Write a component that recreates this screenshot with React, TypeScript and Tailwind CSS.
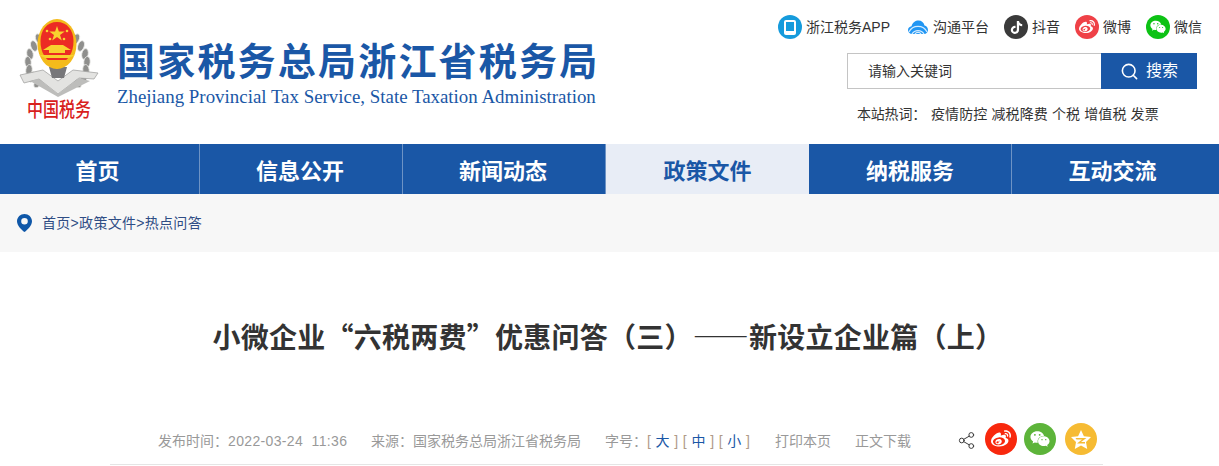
import React from "react";
import { FaWeibo, FaWeixin, FaTiktok } from "react-icons/fa";
import { Search, Share2 } from "lucide-react";

const sans = "font-['Liberation_Sans','Noto_Sans_CJK_SC',sans-serif]";
const cjk = "font-['Noto_Sans_CJK_SC',sans-serif]";

const leaves = [
  [20, 20, -25], [15, 27, -20], [11, 35, -12], [9, 43, -5], [10, 51, 8], [13, 58, 22], [19, 64, 38],
];

function Emblem() {
  return (
    <svg width="80" height="78" viewBox="0 0 80 78" className="block">
      {leaves.map(([x, y, r], i) => (
        <g key={i}>
          <ellipse cx={x} cy={y} rx="3.200" ry="5.500" transform={`rotate(${r} ${x} ${y})`} fill="#8f8f8d" stroke="#ecece9" strokeWidth="0.800" />
          <ellipse cx={77 - x} cy={y} rx="3.200" ry="5.500" transform={`rotate(${-r} ${77 - x} ${y})`} fill="#8f8f8d" stroke="#ecece9" strokeWidth="0.800" />
        </g>
      ))}
      <path d="M1 56 L24 51 L39 62 L54 51 L79 54 L75 60 L60 59 L39 75 L20 60 L5 64 Z" fill="#e3e3e1" stroke="#a5a5a3" strokeWidth="0.800" />
      <path d="M11 62 L20 60 L39 75 L60 59 L71 62 L39 78 Z" fill="#bdbdbb" />
      <path d="M30 48 h18 l-3 11 h-12 Z" fill="#77777a" />
      <ellipse cx="38" cy="25" rx="19.500" ry="25" fill="#f4bb1c" />
      <path d="M38 3 C48 3 54.500 11 54.500 22 C54.500 33 50 42 38 47 C26 42 21.500 33 21.500 22 C21.500 11 28 3 38 3 Z" fill="#ec2b24" />
      <path d="M38 7 l1.900 5.500 h5.800 l-4.700 3.400 1.800 5.600 -4.800-3.400 -4.800 3.400 1.800-5.600 -4.700-3.400 h5.800 Z" fill="#f8d22f" />
      <circle cx="28" cy="12" r="1.300" fill="#f8d22f" />
      <circle cx="48" cy="12" r="1.300" fill="#f8d22f" />
      <circle cx="31" cy="20" r="1.300" fill="#f8d22f" />
      <circle cx="45" cy="20" r="1.300" fill="#f8d22f" />
      <path d="M24 31 L32 26 H44 L52 31 H46 V34 H30 V31 Z" fill="#f8d22f" />
      <path d="M20 36 H56 L50 39 H26 Z" fill="#f8d22f" />
      <path d="M26 41 H50 L44 46 L38 50 L32 46 Z" fill="#f4bb1c" />
    </svg>
  );
}

function Cloud() {
  return (
    <svg width="20" height="16" viewBox="0 0 20 16">
      <path d="M4.500 15 C1.500 15 0 13 0 11 C0 9 1.500 7.500 3.500 7.300 C4.500 3.500 7.500 1.500 10.500 1.500 C13.500 1.500 16 3.500 16.500 6.500 C18.500 7 20 8.800 20 11 C20 13 18.500 15 16 15 Z" fill="#2196f3" />
      <path d="M4 15 A7 7 0 0 1 16 15 M7 15 A3.500 3.500 0 0 1 13 15 M1 13 A10 10 0 0 1 19 13" fill="none" stroke="#d5ecff" strokeWidth="1.200" />
    </svg>
  );
}

function Circle({ className, children }: { className: string; children: React.ReactNode }) {
  return <span className={`flex items-center justify-center rounded-full ${className}`}>{children}</span>;
}

function TopLink({ icon, label, className }: { icon: React.ReactNode; label: string; className?: string }) {
  return (
    <span className={`flex items-center gap-[4px] text-[14px] leading-[24px] text-[#333] ${className ?? ""}`}>
      {icon}
      {label}
    </span>
  );
}

const navItems = ["信息公开", "新闻动态", "政策文件", "纳税服务", "互动交流"];

export default function App() {
  return (
    <div className={`w-[1219px] h-[466px] overflow-hidden bg-white ${sans}`}>
      <header className="h-[144px] flex justify-between">
        <div className="flex pl-[19px] pt-[19px]">
          <div className="w-[80px] flex flex-col items-center">
            <Emblem />
            <span className={`text-[#d8201c] text-[16px] leading-[20px] font-medium mt-[1px] scale-y-125 ${cjk}`}>中国税务</span>
          </div>
          <div className="ml-[18px] pt-[17px]">
            <div className={`text-[#1a57a6] text-[38px] leading-[46px] font-bold tracking-[2.2px] whitespace-nowrap ${cjk}`}>国家税务总局浙江省税务局</div>
            <div className="text-[#1a57a6] text-[18.900px] leading-[24px] mt-[3px] font-['Liberation_Serif',serif] whitespace-nowrap">Zhejiang Provincial Tax Service, State Taxation Administration</div>
          </div>
        </div>
        <div className="w-[441px] pt-[14px] flex flex-col">
          <div className="flex items-center h-[26px]">
            <TopLink
              label="浙江税务APP"
              icon={
                <Circle className="w-[24px] h-[24px] bg-[#169bdc]">
                  <span className="w-[12px] h-[15px] rounded-[2px] bg-white flex items-center justify-center"><span className="w-[8px] h-[9px] bg-[#169bdc] -mt-[2px]" /></span>
                </Circle>
              }
            />
            <TopLink className="ml-[18px] gap-[5px]" label="沟通平台" icon={<Cloud />} />
            <TopLink
              className="ml-[15px]"
              label="抖音"
              icon={<Circle className="w-[24px] h-[24px] bg-[#3a3a3a] text-white"><FaTiktok size={13} /></Circle>}
            />
            <TopLink
              className="ml-[15px]"
              label="微博"
              icon={<Circle className="w-[24px] h-[24px] bg-[#ef4147] text-white"><FaWeibo size={16} /></Circle>}
            />
            <TopLink
              className="ml-[15px]"
              label="微信"
              icon={<Circle className="w-[24px] h-[24px] bg-[#0dc215] text-white"><FaWeixin size={16} /></Circle>}
            />
          </div>
          <div className="mt-[13px] ml-[69px] w-[350px] h-[36px] flex">
            <div className="w-[254px] h-[36px] border border-[#c4c4c4] border-r-0 pl-[20px] text-[14px] leading-[34px] text-[#333]">请输入关键词</div>
            <div className="w-[96px] h-[36px] bg-[#1a57a6] text-white text-[16px] flex items-center justify-center gap-[7px]">
              <Search size={19} strokeWidth={2} />
              搜索
            </div>
          </div>
          <div className="mt-[15px] ml-[79px] text-[14px] leading-[20px] text-[#333] whitespace-nowrap tracking-[-0.2px]">
            本站热词：<span className="ml-[5px] tracking-[0.12px]">疫情防控 减税降费 个税 增值税 发票</span>
          </div>
        </div>
      </header>

      <nav className={`h-[50px] bg-[#1a57a6] flex ${cjk}`}>
        <div className="w-[200px] flex items-center justify-center border-r border-[#6d93c5] text-white text-[22px] font-bold pr-[4px]">首页</div>
        {navItems.map((t, i) => (
          <div
            key={t}
            className={`w-[203px] flex items-center justify-center text-[22px] font-bold ${t === "政策文件" ? "bg-[#e8edf6] text-[#1a57a6]" : "text-white"} ${i === 0 || i === 1 || i === 3 ? "border-r border-[#6d93c5]" : ""} ${i === 0 || i === 1 || i === 4 ? "pr-[2px]" : ""}`}
          >
            {t}
          </div>
        ))}
      </nav>

      <div className="h-[58px] bg-[#f7f7f7] flex items-center pl-[17px]">
        <svg width="15" height="18" viewBox="0 0 15 18">
          <path fillRule="evenodd" d="M7.500 0 C3.400 0 0 3.200 0 7.200 C0 11.500 4.500 15.800 7.500 18 C10.500 15.800 15 11.500 15 7.200 C15 3.200 11.600 0 7.500 0 Z M7.500 4 A3.300 3.300 0 1 1 7.500 10.600 A3.300 3.300 0 0 1 7.500 4 Z" fill="#0f57a8" />
        </svg>
        <span className="ml-[10px] text-[14px] tracking-[0.3px] text-[#2f4d85]">首页&gt;政策文件&gt;热点问答</span>
      </div>

      <h1 lang="zh-CN" className={`mt-[64px] pr-[3px] text-center text-[28px] leading-[40px] font-bold tracking-[0.25px] text-[#333] whitespace-nowrap ${cjk}`}>
        小微企业“六税两费”优惠问答（三）——新设立企业篇（上）
      </h1>

      <div className="mt-[74px] ml-[110px] w-[993px] h-[35px] border-b border-[#e5e5e5] flex items-start pl-[48px] text-[14px] leading-[22px] text-[#999] whitespace-pre">
        <span className="w-[213px]">发布时间：<span className="tracking-[0.35px]">2022-03-24  11:36</span></span>
        <span className="w-[234px]">来源：国家税务总局浙江省税务局</span>
        <span className="w-[170px]">
          字号：<span className="text-[#b09a88] tracking-[0.4px]">[ <span className="text-[#1a57a6]">大</span> ] [ <span className="text-[#1a57a6]">中</span> ] [ <span className="text-[#1a57a6]">小</span> ]</span>
        </span>
        <span className="w-[80px]">打印本页</span>
        <span className="w-[102px]">正文下载</span>
        <Share2 size={19} strokeWidth={1.200} className="text-[#333] mt-[1px]" />
        <div className="flex -mt-[7px] ml-[9px]">
          <Circle className="w-[32px] h-[32px] bg-[#f8280d] text-white"><FaWeibo size={20} /></Circle>
          <Circle className="w-[32px] h-[32px] bg-[#5db43a] text-white ml-[7px]"><FaWeixin size={20} /></Circle>
          <Circle className="w-[32px] h-[32px] bg-[#f6bb33] text-white ml-[9px]">
            <svg width="20" height="19" viewBox="0 0 20 19">
              <path d="M10 0 L12.900 6.200 L20 7 L15 12 L16.200 19 L10 15.600 L3.800 19 L5 12 L0 7 L7.100 6.200 Z" fill="#fff" />
              <path d="M4.500 8 H15.500 L10 12 H14 V13.500 H6 L11 9.500 H5.500 Z" fill="#f6bb33" />
            </svg>
          </Circle>
        </div>
      </div>
    </div>
  );
}
